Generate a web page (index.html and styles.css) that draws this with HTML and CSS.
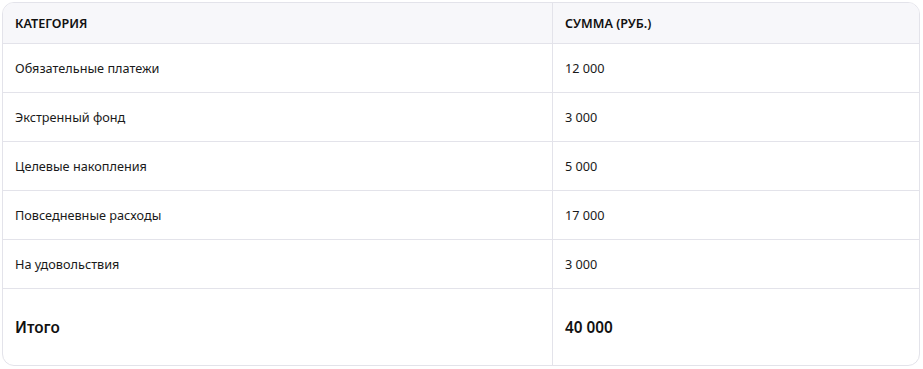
FILE: index.html
```html
<!DOCTYPE html>
<html lang="ru">
<head>
<meta charset="utf-8">
<link rel="stylesheet" href="styles.css">
</head>
<body>
<div class="wrap">
  <table class="budget">
    <thead>
      <tr><th class="c1">Категория</th><th>Сумма (руб.)</th></tr>
    </thead>
    <tbody>
      <tr><td class="c1">Обязательные платежи</td><td>12 000</td></tr>
      <tr><td class="c1">Экстренный фонд</td><td>3 000</td></tr>
      <tr><td class="c1">Целевые накопления</td><td>5 000</td></tr>
      <tr><td class="c1">Повседневные расходы</td><td>17 000</td></tr>
      <tr><td class="c1">На удовольствия</td><td>3 000</td></tr>
      <tr class="total"><td class="c1">Итого</td><td>40 000</td></tr>
    </tbody>
  </table>
</div>
</body>
</html>
```
FILE: styles.css
```css
html, body { margin: 0; padding: 0; background: #fff; }
body { font-family: "Noto Sans", "Open Sans", sans-serif; color: #1a1a1a; }
.wrap {
  margin: 2px 3px 0 2px;
  border: 1px solid #e3e3ea;
  border-radius: 12px;
  overflow: hidden;
  width: 916px;
}
.budget { width: 100%; border-collapse: collapse; }
.budget th {
  background: #f7f7fa;
  text-align: left;
  font-size: 12.6px;
  font-weight: 600;
  text-transform: uppercase;
  height: 40px;
  padding: 0 12px;
  border-bottom: 1px solid #e3e3ea;
  color: #111;
}
.budget td {
  font-size: 12.7px;
  height: 48px;
  padding: 0 12px;
  border-bottom: 1px solid #e3e3ea;
}
.budget .c1 { width: 525px; border-right: 1px solid #e3e3ea; }
.budget tr.total td {
  height: 76px;
  font-size: 15.3px;
  font-weight: 600;
  border-bottom: none;
  color: #111;
}
```
